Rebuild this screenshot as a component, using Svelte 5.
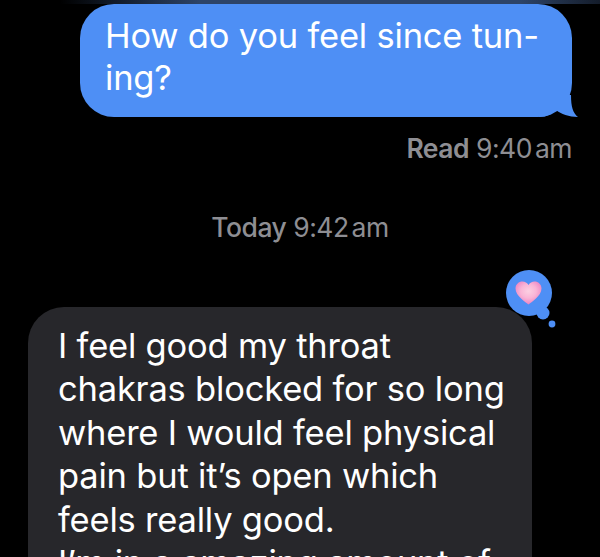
<script>
  const sentLines = ['How do you feel since tun-', 'ing?']
  const gotLines = [
    'I feel good my throat',
    'chakras blocked for so long',
    'where I would feel physical',
    'pain but it’s open which',
    'feels really good.',
    'I’m in a amazing amount of',
  ]
</script>

<main class="thread">
  <div class="top-strip"></div>

  <div class="sent-row">
    <div class="bubble sent">
      {#each sentLines as line}
        <div>{line}</div>
      {/each}
      <svg class="tail" width="50" height="37" viewBox="0 0 50 37">
        <path d="M10 37C18 37 23 34 27 30C32 34 40 37 49 37C44 33 42 27 42 15L10 15Z" fill="#4e8ff5" />
      </svg>
    </div>
  </div>

  <div class="read"><b>Read</b> 9:40<span class="ampm">am</span></div>
  <div class="day"><span class="today">Today</span> 9:42<span class="ampm">am</span></div>

  <div class="got-row">
    <div class="bubble got">
      {#each gotLines as line}
        <div>{line}</div>
      {/each}
    </div>
    <svg class="tapback" width="54" height="60" viewBox="0 0 54 60">
      <defs>
        <radialGradient id="heart" cx="0.5" cy="0.42" r="0.6">
          <stop offset="0" stop-color="#fcd0e2" />
          <stop offset="0.5" stop-color="#fab4d6" />
          <stop offset="1" stop-color="#ec7fc0" />
        </radialGradient>
      </defs>
      <circle cx="23" cy="23" r="23" fill="#4e8ff5" />
      <circle cx="37" cy="43" r="6.5" fill="#4e8ff5" />
      <circle cx="46" cy="54" r="3.4" fill="#4e8ff5" />
      <path d="M22.5 34.5C20 32.5 9.5 26 9.5 18.5C9.5 14.2 12.8 11.5 16.5 11.5C19 11.5 21.3 12.8 22.5 15C23.7 12.8 26 11.5 28.5 11.5C32.2 11.5 35.5 14.2 35.5 18.5C35.5 26 25 32.5 22.5 34.5Z" fill="url(#heart)" />
    </svg>
  </div>
</main>

<style>
  :global(body) {
    margin: 0;
    background: #000;
  }

  .thread {
    width: 600px;
    height: 557px;
    overflow: hidden;
    background: #000;
    font-family: Inter, 'Liberation Sans', sans-serif;
  }

  .top-strip {
    height: 4px;
    background: linear-gradient(to right, #000 60px, #2d4468 200px, #2d4468 520px, #141c2a 600px);
  }

  .sent-row {
    display: flex;
    justify-content: flex-end;
    padding-right: 28px;
  }

  .bubble {
    position: relative;
    color: #fff;
    font-size: 34.5px;
    letter-spacing: -0.2px;
    white-space: nowrap;
  }

  .sent {
    box-sizing: border-box;
    width: 492px;
    height: 113px;
    padding: 11px 0 0 25px;
    line-height: 42px;
    background: #4e8ff5;
    border-radius: 34px;
  }

  .tail {
    position: absolute;
    right: -7px;
    bottom: 0;
  }

  .read,
  .day {
    font-size: 26.5px;
    line-height: 32px;
    letter-spacing: -0.5px;
    color: #8e8e93;
  }

  .read {
    margin-top: 15px;
    padding-right: 28px;
    text-align: right;
  }

  .read b {
    font-weight: 600;
  }

  .today {
    font-weight: 500;
  }

  .ampm {
    margin-left: 3px;
  }

  .day {
    margin-top: 47px;
    text-align: center;
  }

  .got-row {
    position: relative;
    margin-top: 64px;
    padding-left: 28px;
  }

  .got {
    box-sizing: border-box;
    width: 504px;
    padding: 17px 0 20px 30px;
    line-height: 43.4px;
    background: #27272b;
    border-radius: 36px;
  }

  .tapback {
    position: absolute;
    left: 506px;
    top: -37px;
  }
</style>
